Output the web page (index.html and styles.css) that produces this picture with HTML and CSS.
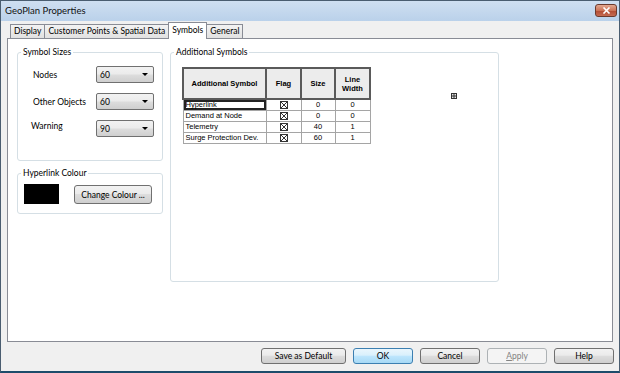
FILE: index.html
```html
<!DOCTYPE html>
<html lang="en">
<head>
  <meta charset="UTF-8" />
  <title>GeoPlan Properties</title>
  <link rel="stylesheet" href="styles.css">
</head>
<body>
  <div class="window">
    <div class="titlebar">
      <span class="title">GeoPlan Properties</span>
      <span class="close">
        <svg width="9" height="7" viewBox="0 0 9 7"><path d="M1.5 0.5 L7.5 6.5 M7.5 0.5 L1.5 6.5" stroke="#fff" stroke-width="1.6"/></svg>
      </span>
    </div>

    <div class="body">
      <div class="tabs">
        <div class="tab">Display</div>
        <div class="tab">Customer Points &amp; Spatial Data</div>
        <div class="tab active">Symbols</div>
        <div class="tab">General</div>
      </div>

      <div class="panel">
        <div class="left">
          <fieldset class="group sizes">
            <legend>Symbol Sizes</legend>
            <div class="field">
              <label>Nodes</label>
              <div class="combo"><span>60</span><i class="arrow"></i></div>
            </div>
            <div class="field">
              <label>Other Objects</label>
              <div class="combo"><span>60</span><i class="arrow"></i></div>
            </div>
            <div class="field warn">
              <label>Warning</label>
              <div class="combo"><span>90</span><i class="arrow"></i></div>
            </div>
          </fieldset>

          <fieldset class="group colour">
            <legend>Hyperlink Colour</legend>
            <div class="colour-row">
              <div class="swatch"></div>
              <button class="btn change">Change Colour ...</button>
            </div>
          </fieldset>
        </div>

        <fieldset class="group extra">
          <legend>Additional Symbols</legend>
          <div class="extra-body">
            <table class="symtable">
              <colgroup>
                <col style="width: 83px">
                <col style="width: 35px">
                <col style="width: 34px">
                <col style="width: 35px">
              </colgroup>
              <thead>
                <tr>
                  <th>Additional Symbol</th>
                  <th>Flag</th>
                  <th>Size</th>
                  <th>Line<br>Width</th>
                </tr>
              </thead>
              <tbody>
                <tr>
                  <td class="name focus">Hyperlink</td>
                  <td><svg class="check" width="8" height="8" viewBox="0 0 8 8"><rect x="0.5" y="0.5" width="7" height="7" fill="#fff" stroke="#333"/><path d="M1 1 L7 7 M7 1 L1 7" stroke="#333"/></svg></td>
                  <td>0</td>
                  <td>0</td>
                </tr>
                <tr>
                  <td class="name">Demand at Node</td>
                  <td><svg class="check" width="8" height="8" viewBox="0 0 8 8"><rect x="0.5" y="0.5" width="7" height="7" fill="#fff" stroke="#333"/><path d="M1 1 L7 7 M7 1 L1 7" stroke="#333"/></svg></td>
                  <td>0</td>
                  <td>0</td>
                </tr>
                <tr>
                  <td class="name">Telemetry</td>
                  <td><svg class="check" width="8" height="8" viewBox="0 0 8 8"><rect x="0.5" y="0.5" width="7" height="7" fill="#fff" stroke="#333"/><path d="M1 1 L7 7 M7 1 L1 7" stroke="#333"/></svg></td>
                  <td>40</td>
                  <td>1</td>
                </tr>
                <tr>
                  <td class="name">Surge Protection Dev.</td>
                  <td><svg class="check" width="8" height="8" viewBox="0 0 8 8"><rect x="0.5" y="0.5" width="7" height="7" fill="#fff" stroke="#333"/><path d="M1 1 L7 7 M7 1 L1 7" stroke="#333"/></svg></td>
                  <td>60</td>
                  <td>1</td>
                </tr>
              </tbody>
            </table>
            <svg class="grip" width="6" height="6" viewBox="0 0 6 6">
              <rect x="0.5" y="0.5" width="5" height="5" fill="#e4e4e4" stroke="#333"/>
              <path d="M3 0.5 V5.5 M0.5 3 H5.5" stroke="#333"/>
            </svg>
          </div>
        </fieldset>
      </div>
    </div>

    <div class="footer">
      <button class="btn wide">Save as Default</button>
      <button class="btn default">OK</button>
      <button class="btn">Cancel</button>
      <button class="btn" disabled><u>A</u>pply</button>
      <button class="btn">Help</button>
    </div>
  </div>
</body>
</html>
```

FILE: styles.css
```css
* {
  box-sizing: border-box;
}

body {
  margin: 0;
  font-family: Lato, "Open Sans", sans-serif;
  font-size: 8.5px;
  color: #000;
  background: #fff;
}

.window {
  width: 620px;
  height: 373px;
  border: 1px solid #4a5d70;
  border-bottom: 2px solid #1d4c6b;
  background: #f0f0f0;
  display: flex;
  flex-direction: column;
}

/* title bar */
.titlebar {
  height: 20px;
  flex: none;
  background: linear-gradient(#cfdff1, #bad1ea);
  display: flex;
  align-items: center;
  justify-content: space-between;
  padding: 0 2px 2px 4px;
}

.title {
  font-size: 9.5px;
  color: #111;
}

.close {
  width: 22px;
  height: 13px;
  border: 1px solid #6b3a2d;
  border-radius: 3px;
  background: linear-gradient(#e2a890, #cc7458 50%, #b24a31 51%, #c56b52);
  display: flex;
  align-items: center;
  justify-content: center;
}

/* tabs */
.body {
  flex: none;
  padding: 0 6px;
}

.tabs {
  height: 17px;
  display: flex;
  align-items: flex-end;
  padding-left: 3px;
}

.tab {
  height: 14px;
  line-height: 12px;
  padding: 0 3px;
  margin-right: -1px;
  border: 1px solid #898c95;
  border-bottom: none;
  background: linear-gradient(#f3f3f3, #e1e1e1);
}

.tab.active {
  height: 17px;
  line-height: 14px;
  margin-bottom: -1px;
  padding: 0 3px;
  background: #fff;
  position: relative;
  z-index: 1;
}

.panel {
  height: 304px;
  border: 1px solid #898c95;
  background: #fff;
  display: flex;
  gap: 7px;
  padding: 7px 0 0 9px;
}

/* group boxes */
.group {
  margin: 0;
  padding: 0;
  min-width: 0;
  border: 1px solid #d5dfe5;
  border-radius: 3px;
}

.group legend {
  margin-left: 3px;
  padding: 0 2px;
  line-height: 12px;
}

.left {
  width: 146px;
  display: flex;
  flex-direction: column;
  gap: 6px;
}

.sizes {
  height: 115px;
  padding-top: 8px;
}

.field {
  display: flex;
  align-items: center;
  height: 17px;
  margin: 0 0 10px 15px;
}

.field label {
  width: 63px;
}

.field.warn label {
  margin: -5px 0 0 -2px;
  width: 65px;
}

.combo {
  width: 58px;
  height: 17px;
  border: 1px solid #707070;
  border-radius: 2px;
  background: linear-gradient(#f2f2f2, #ebebeb 48%, #dddddd 52%, #cfcfcf);
  display: flex;
  align-items: center;
  justify-content: space-between;
  padding: 0 5px 0 3px;
}

.arrow {
  border-left: 3px solid transparent;
  border-right: 3px solid transparent;
  border-top: 3px solid #000;
}

.colour {
  height: 47px;
  padding-top: 5px;
}

.colour-row {
  display: flex;
  align-items: flex-start;
  gap: 15px;
  margin-left: 6px;
}

.swatch {
  width: 35px;
  height: 20px;
  background: #000;
}

/* buttons */
.btn {
  width: 60px;
  height: 16px;
  padding: 0;
  font: inherit;
  color: #000;
  border: 1px solid #707070;
  border-radius: 3px;
  background: linear-gradient(#f2f2f2, #ebebeb 45%, #dddddd 50%, #cfcfcf);
}

.btn.change {
  width: 78px;
  height: 19px;
  margin-top: 1px;
}

.btn.wide {
  width: 85px;
}

.btn.default {
  border-color: #3c7fb1;
  background: linear-gradient(#eaf6fd, #d9f0fc 45%, #bee6fd 50%, #a7d9f5);
}

.btn:disabled {
  border-color: #adb2b5;
  background: #f4f4f4;
  color: #838383;
}

/* additional symbols */
.extra {
  width: 329px;
  height: 236px;
  padding-top: 9px;
}

.extra-body {
  display: flex;
  align-items: flex-start;
  margin-left: 11px;
}

.grip {
  margin: 26px 0 0 80px;
}

.symtable {
  width: 187px;
  table-layout: fixed;
  border-collapse: collapse;
  font-family: "Liberation Sans", Arial, sans-serif;
  font-size: 7.5px;
  color: #000;
}

.symtable th {
  height: 31px;
  padding: 0;
  font-size: 7.5px;
  line-height: 9px;
  background: #ececec;
  border: 2px solid #5a5a5a;
}

.symtable td {
  height: 11px;
  padding: 0 2px;
  line-height: 9px;
  text-align: center;
  border: 1px solid #a5a5a5;
}

.symtable td.name {
  text-align: left;
}

.symtable td.focus {
  box-shadow: inset 0 0 0 2px #222;
}

.check {
  display: block;
  margin: 0 auto;
}

.footer {
  flex: 1;
  display: flex;
  justify-content: flex-end;
  align-items: flex-start;
  gap: 7px;
  padding: 6px 5px 0 0;
}
```
